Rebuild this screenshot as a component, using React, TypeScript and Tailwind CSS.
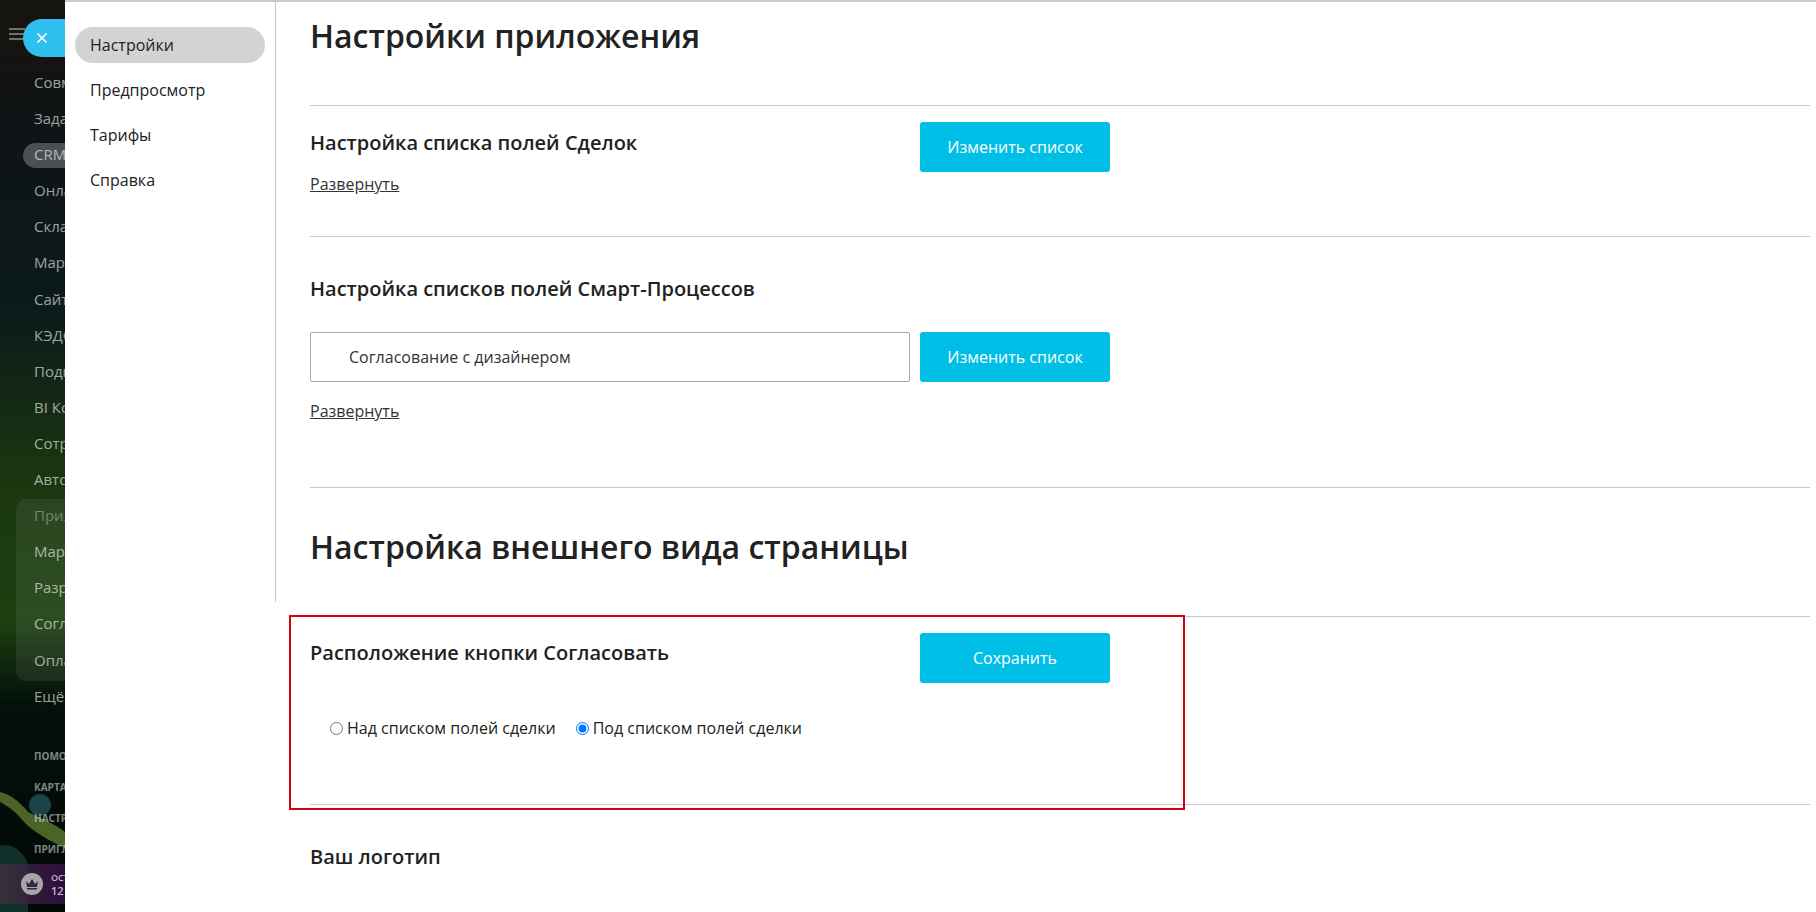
import React from "react";

const F = { fontFamily: '"Open Sans", sans-serif' };
const items = ["Совместная работа","Задачи и проекты","CRM","Онлайн-запись","Склад","Маркетинг","Сайты","КЭДО","Подпись","BI Конструктор","Сотрудники","Автоматизация","Приложения","Маркет","Разработчикам","Согласование","Оплата","Ещё"];
const small = ["ПОМОЩЬ","КАРТА САЙТА","НАСТРОЙКИ","ПРИГЛАСИТЬ"];

function Btn({ children }: { children: React.ReactNode }) {
  return <button className="w-[190px] h-[50px] bg-[#00bfe7] rounded-[3px] text-white text-[16px]">{children}</button>;
}
function Expand() {
  return <a className="block text-[16px] leading-[20px] text-[#333] underline">Развернуть</a>;
}
function Radio({ on, label }: { on?: boolean; label: string }) {
  return (
    <label className="flex items-center text-[16px] leading-[22px] text-[#222]">
      <input type="radio" name="pos" defaultChecked={on} className="w-[13px] h-[13px] m-0 mr-[4px] accent-[#0075ff]" />
      {label}
    </label>
  );
}

export default function App() {
  return (
    <div className="relative flex h-[912px] w-[1816px] overflow-hidden bg-white" style={F}>
      <aside className="relative w-[65px] h-full shrink-0 overflow-hidden bg-[linear-gradient(180deg,#16140f_0%,#0e1418_18%,#0b1a1a_34%,#1a3610_52%,#1c4010_68%,#04110a_77%,#020806_100%)]">
        <svg className="absolute left-0 top-[780px]" width="65" height="132" viewBox="0 0 65 132">
          <path d="M0 12 C10 14 20 22 28 32 C40 38 55 44 65 52 L65 68 C48 60 34 52 24 42 C16 32 8 26 0 22 Z" fill="#4a6428" />
          <circle cx="40" cy="25" r="11" fill="#1a4446" />
          <path d="M0 66 C12 62 24 72 28 84 L28 132 L0 132 Z" fill="#12302a" />
        </svg>
        <div className="absolute left-[16px] top-[499px] w-[80px] h-[182px] rounded-[10px] bg-white/[0.07]" />
        <svg className="absolute left-[9px] top-[28px]" width="16" height="12" viewBox="0 0 16 12" stroke="#8d8f90" strokeWidth="1.6">
          <path d="M0 1h16M0 6h16M0 11h16" />
        </svg>
        <div className="absolute left-[23px] top-[19px] w-[60px] h-[38px] rounded-l-[19px] bg-[#2fc0f0] flex pl-[13px] items-center">
          <svg width="12" height="12" viewBox="0 0 12 12" stroke="#fff" strokeWidth="1.7"><path d="M1.5 1.5l9 9M10.5 1.5l-9 9" /></svg>
        </div>
        <div className="absolute left-[23px] top-[143px] w-[70px] h-[25px] rounded-full bg-white/25" />
        <ul className="relative pt-[64px] pl-[34px]">
          {items.map((t) => (
            <li key={t} className={`h-[36.1px] leading-[36px] text-[15px] whitespace-nowrap ${t === "Приложения" ? "text-white/35" : "text-white/60"}`}>{t}</li>
          ))}
        </ul>
        <ul className="relative mt-[27px] pl-[34px]">
          {small.map((t) => (
            <li key={t} className="h-[31px] leading-[31px] text-[10px] font-bold whitespace-nowrap text-white/50">{t}</li>
          ))}
        </ul>
        <div className="absolute left-0 top-[864px] w-full h-[40px] bg-[linear-gradient(90deg,rgba(60,50,60,0.8),rgba(50,15,70,0.9))] flex items-center pl-[21px] gap-[8px]">
          <div className="w-[22px] h-[22px] shrink-0 rounded-full bg-[#a7a5a8] flex items-center justify-center">
            <svg width="14" height="12" viewBox="0 0 14 12" fill="#35253a"><path d="M1 3l3 3 3-5 3 5 3-3-1 6H2zM2 10h10v1.5H2z" /></svg>
          </div>
          <div className="text-[9px] leading-[13px] font-semibold text-[#c9b3d0] whitespace-nowrap">ОСТАЛОСЬ<br /><span className="text-[11px]">12 ДНЕЙ</span></div>
        </div>
      </aside>

      <nav className="w-[211px] h-[600px] shrink-0 border-r border-[#c4c4c4] bg-white pt-[25px] pl-[10px] pr-[10px] mt-[2px] text-[16px] text-[#222]">
        <div className="h-[36px] leading-[37px] pl-[15px] w-[190px] rounded-full bg-[#d3d3d3]">Настройки</div>
        <div className="h-[45px] leading-[45px] mt-[5px] pl-[15px]">Предпросмотр</div>
        <div className="h-[45px] leading-[45px] pl-[15px]">Тарифы</div>
        <div className="h-[45px] leading-[45px] pl-[15px]">Справка</div>
      </nav>

      <main className="flex-1 pl-[34px] pr-[6px] text-[#222]">
        <h1 className="h-[105px] pt-[13px] text-[32px] leading-[46px] font-semibold">Настройки приложения</h1>

        <section className="h-[131px] border-t border-[#c8c8c8] pt-[16px]">
          <div className="flex">
            <h2 className="w-[610px] text-[20px] leading-[24px] font-semibold pt-[9px]">Настройка списка полей Сделок</h2>
            <Btn>Изменить список</Btn>
          </div>
          <div className="mt-[2px]"><Expand /></div>
        </section>

        <section className="h-[251px] border-t border-[#c8c8c8] pt-[40px]">
          <h2 className="text-[20px] leading-[24px] font-semibold">Настройка списков полей Смарт-Процессов</h2>
          <div className="flex mt-[31px] gap-[10px]">
            <div className="w-[600px] h-[50px] border border-[#a9a9a9] rounded-[2px] pl-[38px] leading-[49px] text-[16px] text-[#333]">Согласование с дизайнером</div>
            <Btn>Изменить список</Btn>
          </div>
          <div className="mt-[19px]"><Expand /></div>
        </section>

        <section className="h-[129px] border-t border-[#c8c8c8]">
          <h1 className="pt-[36px] text-[32px] leading-[46px] font-semibold">Настройка внешнего вида страницы</h1>
        </section>

        <section className="h-[188px] border-t border-[#c8c8c8] pt-[16px]">
          <div className="flex">
            <h2 className="w-[610px] text-[20px] leading-[24px] font-semibold pt-[8px]">Расположение кнопки Согласовать</h2>
            <Btn>Сохранить</Btn>
          </div>
          <div className="flex pl-[20px] mt-[34px] gap-[20px]">
            <Radio label="Над списком полей сделки" />
            <Radio on label="Под списком полей сделки" />
          </div>
        </section>

        <section className="border-t border-[#c8c8c8] pt-[40px]">
          <h2 className="text-[20px] leading-[24px] font-semibold">Ваш логотип</h2>
        </section>
      </main>

      <div className="absolute left-[65px] right-0 top-0 h-[2px] bg-[#c0ced8]" />
      <div className="absolute left-[289px] top-[615px] w-[896px] h-[195px] border-2 border-[#d5000f] pointer-events-none" />
    </div>
  );
}
